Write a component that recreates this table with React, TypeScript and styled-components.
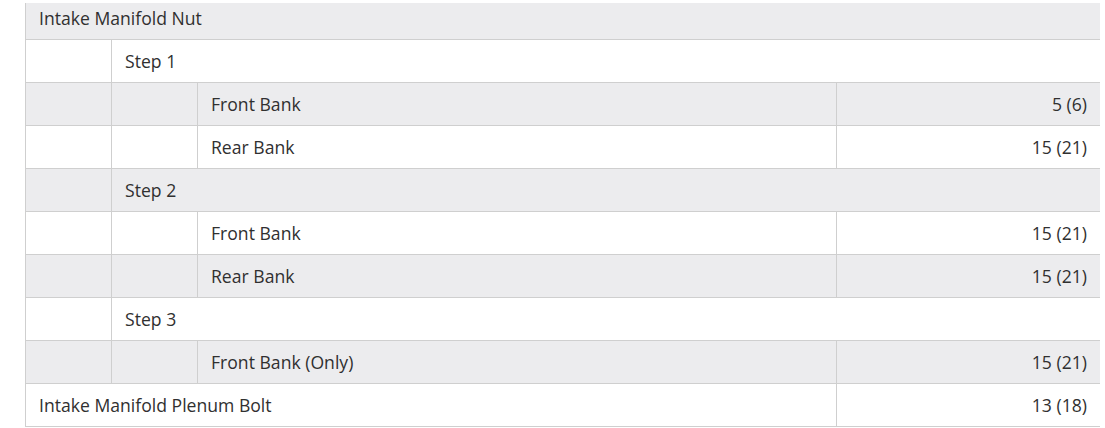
import React from 'react';
import styled, { createGlobalStyle } from 'styled-components';

const GlobalStyle = createGlobalStyle`
    html, body {
        margin: 0;
        padding: 0;
        background: #ffffff;
    }
`;

const Page = styled.div`
    padding: 3px 0 0 25px;
    font-family: 'Open Sans', 'Noto Sans', Arial, sans-serif;
    font-size: 17.6px;
    color: #303030;
`;

const Clip = styled.div`
    width: 1075px;
    overflow: hidden;
`;

const Table = styled.table`
    width: 1075px;
    margin-top: -7px;
    border-collapse: collapse;
    table-layout: fixed;
`;

const Row = styled.tr<{ shaded?: boolean }>`
    background: ${props => (props.shaded ? '#ececee' : '#ffffff')};
`;

const Cell = styled.td<{ align?: 'left' | 'right' }>`
    border: 1px solid #cfcfcf;
    padding: 10px 13px;
    line-height: 22px;
    text-align: ${props => props.align || 'left'};
    white-space: nowrap;
`;

type Line =
    | { kind: 'part'; label: string; value?: string }
    | { kind: 'step'; label: string }
    | { kind: 'bank'; label: string; value: string };

const lines: Line[] = [
    { kind: 'part', label: 'Intake Manifold Nut' },
    { kind: 'step', label: 'Step 1' },
    { kind: 'bank', label: 'Front Bank', value: '5 (6)' },
    { kind: 'bank', label: 'Rear Bank', value: '15 (21)' },
    { kind: 'step', label: 'Step 2' },
    { kind: 'bank', label: 'Front Bank', value: '15 (21)' },
    { kind: 'bank', label: 'Rear Bank', value: '15 (21)' },
    { kind: 'step', label: 'Step 3' },
    { kind: 'bank', label: 'Front Bank (Only)', value: '15 (21)' },
    { kind: 'part', label: 'Intake Manifold Plenum Bolt', value: '13 (18)' },
];

const renderCells = (line: Line) => {
    if (line.kind === 'part') {
        if (!line.value) return <Cell colSpan={4}>{line.label}</Cell>;
        return (
            <>
                <Cell colSpan={3}>{line.label}</Cell>
                <Cell align="right">{line.value}</Cell>
            </>
        );
    }
    if (line.kind === 'step') {
        return (
            <>
                <Cell />
                <Cell colSpan={3}>{line.label}</Cell>
            </>
        );
    }
    return (
        <>
            <Cell />
            <Cell />
            <Cell>{line.label}</Cell>
            <Cell align="right">{line.value}</Cell>
        </>
    );
};

const App = () => (
    <Page>
        <GlobalStyle />
        <Clip>
            <Table>
                <colgroup>
                    <col style={{ width: 86 }} />
                    <col style={{ width: 86 }} />
                    <col style={{ width: 639 }} />
                    <col style={{ width: 264 }} />
                </colgroup>
                <tbody>
                    {lines.map((line, i) => (
                        <Row key={i} shaded={i % 2 === 0}>
                            {renderCells(line)}
                        </Row>
                    ))}
                </tbody>
            </Table>
        </Clip>
    </Page>
);

export default App;
